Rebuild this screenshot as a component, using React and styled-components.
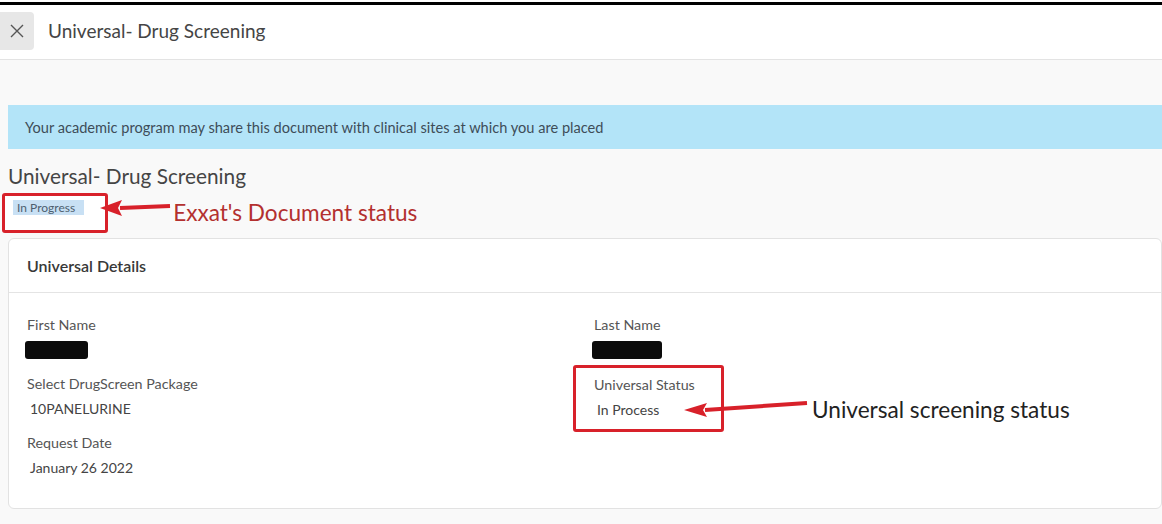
import styled, { createGlobalStyle } from "styled-components";

const GlobalStyle = createGlobalStyle`
  html, body {
    margin: 0;
    background: #fff;
  }
  body {
    font-family: Lato, "Liberation Sans", sans-serif;
    color: #444;
  }
`;

const Page = styled.div`
  margin-top: 2px;
  border-top: 3px solid #000;
  width: 1162px;
  height: 519px;
  display: flex;
  flex-direction: column;
  overflow: hidden;
`;

const Header = styled.header`
  height: 55px;
  flex: none;
  display: flex;
  align-items: flex-start;
  padding-top: 7px;
  box-sizing: border-box;
  background: #fff;
  border-bottom: 1px solid #e3e3e3;
`;

const CloseButton = styled.button`
  width: 34px;
  height: 38px;
  border: 0;
  padding: 0;
  border-radius: 0 4px 4px 0;
  background: #e7e7e7;
  display: grid;
  place-items: center;
  color: #555;
`;

const HeaderTitle = styled.h1`
  margin: 0 0 0 14px;
  font-size: 19px;
  font-weight: 400;
  line-height: 38px;
  color: #454545;
`;

const Body = styled.main`
  flex: 1;
  background: #f9f9f9;
  padding: 45px 0 0 8px;
`;

const Banner = styled.div`
  height: 44px;
  display: flex;
  align-items: center;
  padding-left: 17px;
  background: #b3e4f8;
  color: #3e4d58;
  font-size: 14.6px;
`;

const DocTitle = styled.h2`
  margin: 14px 0 0;
  font-size: 20.8px;
  font-weight: 400;
  line-height: 26px;
  color: #454545;
`;

const AnnotRow = styled.div`
  display: flex;
  align-items: ${(p) => p.$align || "center"};
  margin: ${(p) => p.$margin};
`;

const RedBox = styled.div`
  display: flex;
  align-items: flex-start;
  border: 3px solid #d8212a;
  border-radius: 3px;
  padding: ${(p) => p.$pad};
  width: ${(p) => p.$width || "auto"};
  box-sizing: border-box;
  background: #fff;
  flex: none;
`;

const Badge = styled.span`
  display: block;
  background: #c8e0f4;
  color: #4d5e6e;
  font-size: 12px;
  line-height: 15px;
  padding: 0 9px 0 4px;
`;

const Callout = styled.div`
  display: flex;
  align-items: center;
  margin-left: ${(p) => p.$overlap};
  margin-bottom: ${(p) => p.$lift || "0"};
`;

const CalloutText = styled.span`
  margin-left: ${(p) => p.$gap};
  font-size: 22.6px;
  line-height: 26px;
  color: ${(p) => p.$color};
  white-space: nowrap;
`;

const Card = styled.section`
  margin-top: 5px;
  background: #fff;
  border: 1px solid #e2e2e2;
  border-radius: 6px;
`;

const CardHeader = styled.div`
  height: 53px;
  display: flex;
  align-items: center;
  padding-left: 18px;
  border-bottom: 1px solid #e4e4e4;
  font-size: 16px;
  font-weight: 600;
  color: #383838;
`;

const CardBody = styled.div`
  display: grid;
  grid-template-columns: 567px 1fr;
  row-gap: 12px;
  padding: 22px 18px 28px;
`;

const Field = styled.div``;

const Label = styled.div`
  font-size: 14.3px;
  line-height: 20px;
  color: #555;
`;

const Value = styled.div`
  margin-top: 3px;
  padding-left: 3px;
  font-size: 14px;
  line-height: 24px;
  height: 24px;
  color: #444;
  display: flex;
  align-items: center;
`;

const Redacted = styled.span`
  display: block;
  width: ${(p) => p.$w}px;
  height: 18px;
  margin-left: -5px;
  border-radius: 3px;
  background: #0b0b0b;
`;

const ArrowSvg = styled.svg`
  display: block;
  overflow: visible;
  flex: none;
`;

const Arrow = ({ width, tipY, endY, headLen, headHalf }) => (
  <ArrowSvg width={width} height="22" viewBox={`0 0 ${width} 22`}>
    <line x1={headLen - 2} y1={tipY} x2={width} y2={endY} stroke="#d8212a" strokeWidth="4" />
    <polygon
      points={`0,${tipY} ${headLen},${tipY - headHalf} ${headLen - 4},${tipY} ${headLen},${tipY + headHalf}`}
      fill="#d8212a"
    />
  </ArrowSvg>
);

const CloseIcon = () => (
  <svg width="14" height="14" viewBox="0 0 14 14">
    <path d="M1 1L13 13M13 1L1 13" stroke="#555" strokeWidth="1.4" fill="none" />
  </svg>
);

export default function App() {
  return (
    <>
      <GlobalStyle />
      <Page>
        <Header>
          <CloseButton aria-label="Close">
            <CloseIcon />
          </CloseButton>
          <HeaderTitle>Universal- Drug Screening</HeaderTitle>
        </Header>
        <Body>
          <Banner>
            Your academic program may share this document with clinical sites at which you are placed
          </Banner>
          <DocTitle>Universal- Drug Screening</DocTitle>
          <AnnotRow $margin="4px 0 0 -6px">
            <RedBox $pad="4px 21px 15px 8px">
              <Badge>In Progress</Badge>
            </RedBox>
            <Callout $overlap="-8px">
              <Arrow width={70} tipY={6} endY={4} headLen={22} headHalf={8} />
              <CalloutText $gap="3px" $color="#b3302f">
                Exxat's Document status
              </CalloutText>
            </Callout>
          </AnnotRow>
          <Card>
            <CardHeader>Universal Details</CardHeader>
            <CardBody>
              <Field>
                <Label>First Name</Label>
                <Value>
                  <Redacted $w={63} />
                </Value>
              </Field>
              <Field>
                <Label>Last Name</Label>
                <Value>
                  <Redacted $w={70} />
                </Value>
              </Field>
              <Field>
                <Label>Select DrugScreen Package</Label>
                <Value>10PANELURINE</Value>
              </Field>
              <AnnotRow $align="flex-end" $margin="-10px 0 -11px -21px">
                <RedBox $pad="7px 10px 7px 18px" $width="151px">
                  <Field>
                    <Label>Universal Status</Label>
                    <Value>In Process</Value>
                  </Field>
                </RedBox>
                <Callout $overlap="-40px" $lift="9px">
                  <Arrow width={123} tipY={11} endY={4} headLen={23} headHalf={7} />
                  <CalloutText $gap="5px" $color="#222">
                    Universal screening status
                  </CalloutText>
                </Callout>
              </AnnotRow>
              <Field>
                <Label>Request Date</Label>
                <Value>January 26 2022</Value>
              </Field>
            </CardBody>
          </Card>
        </Body>
      </Page>
    </>
  );
}
